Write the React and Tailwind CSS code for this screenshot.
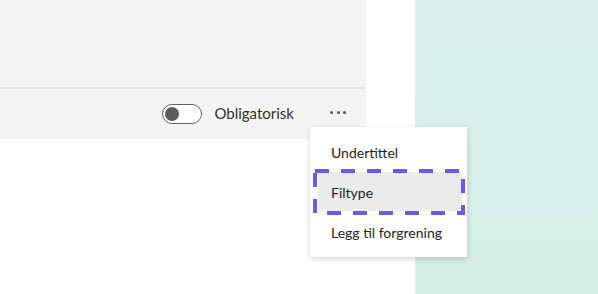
import React from 'react';

const font = { fontFamily: 'Lato, "Noto Sans", sans-serif' };

const MenuItem = ({ label, focused }) => (
  <div className="relative h-[40px] flex items-center">
    {focused && (
      <>
        <div className="absolute left-[8px] right-[5px] top-0 bottom-[1px] bg-[#ebebeb]" />
        <svg className="absolute left-[3px] top-[-3px]" width="152" height="46" viewBox="0 0 152 46">
          <rect x="2" y="2" width="148" height="42" fill="none" stroke="#6b5ae9" strokeWidth="4" strokeDasharray="14 12" />
        </svg>
      </>
    )}
    <span className="relative pl-[21px] text-[14px] text-[#242424]">{label}</span>
  </div>
);

export default function App() {
  return (
    <div className="relative flex w-[598px] h-[294px] bg-white overflow-hidden" style={font}>
      {/* Colonne gauche */}
      <div className="w-[415px] h-full">
        <div className="w-[366px] h-[139px] bg-[#f4f4f4] flex flex-col">
          <div className="h-[89px] border-b-2 border-[#e3e3e3]" />
          <div className="flex-1 flex items-center justify-end pr-[20px] pb-[1px]">
            <div className="w-[40px] h-[20px] rounded-full border border-[#616161] bg-white flex items-center px-[2px]">
              <div className="w-[14px] h-[14px] rounded-full bg-[#5c5c5c]" />
            </div>
            <span className="ml-[12px] text-[15px] text-[#303030]">Obligatorisk</span>
            <div className="ml-[36px] w-[16px] flex justify-between items-center mb-[2px]">
              <span className="w-[3px] h-[3px] rounded-full bg-[#555]" />
              <span className="w-[3px] h-[3px] rounded-full bg-[#555]" />
              <span className="w-[3px] h-[3px] rounded-full bg-[#555]" />
            </div>
          </div>
        </div>
      </div>

      {/* Fond teal */}
      <div className="flex-1 h-full bg-gradient-to-b from-[#dbf0ec] to-[#d4eee5]" />

      {/* Menu contextuel */}
      <div className="absolute left-[310px] top-[127px] w-[157px] py-[5px] bg-white shadow-[0_2px_6px_rgba(0,0,0,0.16)]">
        <MenuItem label="Undertittel" />
        <MenuItem label="Filtype" focused />
        <MenuItem label="Legg til forgrening" />
      </div>
    </div>
  );
}
